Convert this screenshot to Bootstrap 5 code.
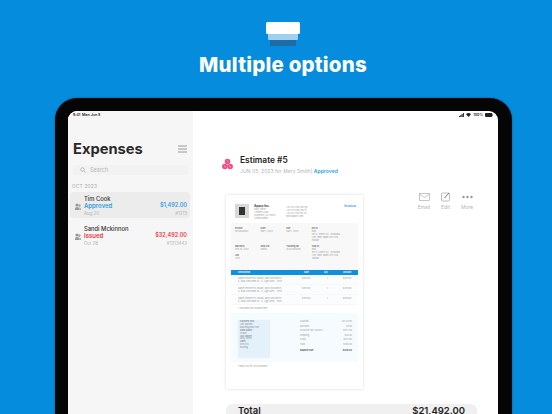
<!DOCTYPE html>
<html lang="en">
<head>
    <meta charset="UTF-8">
    <meta name="viewport" content="width=device-width, initial-scale=1">
    <title>Multiple options</title>
    <link href="https://cdn.jsdelivr.net/npm/bootstrap@5.3.0/dist/css/bootstrap.min.css" rel="stylesheet">
    <style>
        html, body { margin: 0; width: 552px; height: 414px; overflow: hidden; }
        body { background: #058cdc; font-family: Inter, "Liberation Sans", sans-serif; color: #222; }
        .stage { width: 552px; height: 414px; overflow: hidden; }
        .hero { height: 98px; padding: 22px 0 0 14px; }
        .stack-icon { width: 34px; height: 24px; display: block; }
        .hero-title { font-size: 20.5px; font-weight: 800; color: #fff; line-height: 24px; margin: 7px 0 0; letter-spacing: .2px; }
        .device { width: 457px; height: 316px; margin-left: 55px; background: #050505; border-radius: 22px 22px 0 0; padding: 13px 14px 0 13px; box-shadow: 0 0 2px #0b4f7d; }
        .screen { height: 303px; background: #fff; border-radius: 9px 9px 0 0; overflow: hidden; }
        .side { width: 125px; background: #f6f6f6; padding: 0 3px 0 2px; flex: none; }
        .status { height: 8px; font-size: 3.6px; font-weight: 600; line-height: 8px; color: #222; }
        .status-left { padding-left: 3px; }
        .side-head { height: 20px; margin: 20px 3px 0 3px; }
        .side-title { font-size: 14.7px; font-weight: 700; margin: 0; line-height: 20px; color: #2a2a2a; }
        .burger { width: 9px; height: 8px; display: block; }
        .search-box { height: 10px; margin: 6px 2px 0 3px; background: #f2f2f2; border-radius: 3px; padding-left: 7px; font-size: 5.5px; color: #b8b8b8; gap: 4px; }
        .month { font-size: 4.8px; color: #aaa; letter-spacing: .2px; margin: 8px 0 0 2px; line-height: 7px; }
        .exp-item { height: 26px; border-radius: 4px; padding: 2.5px 3px 0 5px; margin-top: 4px; }
        .exp-item.selected { background: #ececec; margin-top: 2px; }
        .exp-item .who { width: 6px; height: 7px; flex: none; margin-right: 3px; }
        .exp-name { font-size: 5.8px; font-weight: 500; line-height: 7.5px; color: #333; }
        .exp-status { font-size: 6px; font-weight: 600; line-height: 7.5px; }
        .exp-sub { font-size: 4.4px; line-height: 7.5px; color: #b2b2b2; }
        .exp-amount { font-size: 5.5px; font-weight: 600; line-height: 7.5px; }
        .c-blue { color: #2e9fdc; }
        .c-red { color: #ef3340; }
        .main-pane { min-width: 0; padding: 0 5px 0 29px; }
        .status-right { gap: 2px; }
        .est-head { margin-top: 30px; height: 30px; }
        .logo-mark { width: 11px; height: 12px; flex: none; margin-right: 7px; }
        .est-title { font-size: 8.4px; font-weight: 600; line-height: 12px; color: #222; }
        .est-sub { font-size: 5px; line-height: 8px; color: #b4b4b4; margin-top: 1px; letter-spacing: .05px; }
        .est-sub b { color: #2e9fdc; font-weight: 600; }
        .body-row { margin-top: 16px; padding-left: 4px; }
        .paper { width: 137px; height: 194px; background: #fff; border-radius: 2px; box-shadow: 0 0 3px rgba(0,0,0,.16); padding: 0 5px; flex: none; font-size: 2.2px; line-height: 3px; color: #999; }
        .paper-top { height: 28px; padding: 9px 2px 0 4px; }
        .co-logo { width: 14px; height: 14px; background: #d9d9d9; flex: none; margin-right: 5px; padding: 3px 4px; }
        .co-logo span { display: block; width: 100%; height: 100%; background: #333; }
        .co-addr { width: 32px; flex: none; }
        .co-name { font-size: 3px; font-weight: 700; color: #333; line-height: 4px; }
        .co-phones { padding-top: 2px; }
        .doc-kind { font-size: 3.4px; font-weight: 600; color: #2e9fdc; line-height: 4px; }
        .meta-box { background: #f8f8f8; height: 47px; padding: 4px 4px 0; }
        .meta-row { height: 18px; }
        .meta-col { flex: 1 1 0; }
        .meta-col.wide { flex: 1.65 1 0; }
        .meta-col b { color: #666; font-weight: 600; display: block; }
        .doc-band { height: 5px; background: #0f8fdc; color: #fff; padding: 0 5px 0 7px; line-height: 5px; font-weight: 600; }
        .band-desc { width: 66px; flex: none; }
        .band-rate { width: 20px; flex: none; }
        .band-qty { width: 19px; flex: none; }
        .doc-row { height: 10px; background: #fafcfe; padding: 1.5px 5px 0 7px; border-bottom: 1px solid #f7f7f7; }
        .doc-row .item-desc { width: 47px; flex: none; margin-right: 17px; }
        .item-rate { width: 25px; flex: none; }
        .item-qty { width: 16px; flex: none; }
        .doc-note { padding: 1.5px 7px 0; height: 8px; }
        .doc-lower { background: #f6fbff; height: 49px; padding: 7px 6px 0 7px; }
        .pay-box { width: 32px; height: 38px; background: #e4f1fb; border-radius: 1px; padding: 1px 2px; margin-right: 30px; flex: none; color: #8a8f99; line-height: 2.9px; overflow: hidden; }
        .sums { flex: 1 1 0; }
        .sum-line { padding-bottom: 1.5px; }
        .sum-total { padding-top: 2px; color: #555; font-weight: 700; }
        .thanks { padding: 3px 7px; }
        .side-actions { margin: -3px 0 0 52px; gap: 3.5px; }
        .act { width: 18px; font-size: 5px; color: #b5b5b5; line-height: 7px; text-align: center; }
        .act svg { width: 11px; height: 10px; display: block; margin: 0 auto 2px; }
        .total-bar { height: 30px; width: 251px; margin: 15px 0 0 4px; background: #f0f0f0; border-radius: 6px; padding: 1px 12px 0; }
        .total-bar span { font-size: 9.5px; font-weight: 600; color: #222; line-height: 12px; }
    </style>
</head>
<body>
<div class="stage">
    <div class="hero d-flex flex-column align-items-center">
        <svg class="stack-icon" viewBox="0 0 34 24">
            <rect x="4" y="15" width="26" height="9" rx="1" fill="#1d6ca5"/>
            <rect x="2" y="10" width="30" height="8" rx="1" fill="#9fd0ef"/>
            <rect x="0" y="0" width="34" height="12" rx="1.5" fill="#fff"/>
        </svg>
        <h1 class="hero-title">Multiple options</h1>
    </div>
    <div class="device">
        <div class="screen d-flex">
            <div class="side">
                <div class="status status-left">9:41&nbsp; Mon Jun 5</div>
                <div class="side-head d-flex justify-content-between align-items-center">
                    <h2 class="side-title">Expenses</h2>
                    <svg class="burger" viewBox="0 0 9 8"><path d="M0 1h9M0 4h9M0 7h9" stroke="#9a9a9a" stroke-width="1"/></svg>
                </div>
                <div class="search-box d-flex align-items-center">
                    <svg width="6" height="6" viewBox="0 0 6 6"><circle cx="2.5" cy="2.5" r="1.8" fill="none" stroke="#aaa" stroke-width=".7"/><path d="M4 4l1.5 1.5" stroke="#aaa" stroke-width=".7"/></svg>
                    <span>Search</span>
                </div>
                <div class="month">OCT 2023</div>
                <div class="exp-item selected d-flex">
                    <svg class="who align-self-center" viewBox="0 0 6 7"><circle cx="2" cy="2" r="1.6" fill="#999"/><circle cx="4.4" cy="2.6" r="1.3" fill="#aaa"/><path d="M0 7c0-2.4.8-3 2-3s2.4.6 2.4 3z" fill="#999"/><path d="M4.6 7H6c0-2-.5-2.8-1.7-2.8z" fill="#aaa"/></svg>
                    <div class="flex-grow-1">
                        <div class="exp-name">Tim Cook</div>
                        <div class="d-flex justify-content-between"><span class="exp-status c-blue">Approved</span><span class="exp-amount c-blue">$1,492.00</span></div>
                        <div class="d-flex justify-content-between exp-sub"><span>Aug 20</span><span>#1213</span></div>
                    </div>
                </div>
                <div class="exp-item d-flex">
                    <svg class="who align-self-center" viewBox="0 0 6 7"><circle cx="2" cy="2" r="1.6" fill="#999"/><circle cx="4.4" cy="2.6" r="1.3" fill="#aaa"/><path d="M0 7c0-2.4.8-3 2-3s2.4.6 2.4 3z" fill="#999"/><path d="M4.6 7H6c0-2-.5-2.8-1.7-2.8z" fill="#aaa"/></svg>
                    <div class="flex-grow-1">
                        <div class="exp-name">Sandi Mckinnon</div>
                        <div class="d-flex justify-content-between"><span class="exp-status c-red">Issued</span><span class="exp-amount c-red">$32,492.00</span></div>
                        <div class="d-flex justify-content-between exp-sub"><span>Oct 28</span><span>#1213443</span></div>
                    </div>
                </div>
            </div>
            <div class="main-pane flex-grow-1">
                <div class="status status-right d-flex justify-content-end align-items-center">
                    <svg width="5" height="4" viewBox="0 0 5 4"><path d="M0 3h1v1H0zM1.300 2h1v2h-1zM2.600 1h1v3h-1zM3.900 0h1v4h-1z" fill="#222"/></svg>
                    <svg width="5" height="4" viewBox="0 0 5 4"><path d="M0 1.300a3.500 3.500 0 0 1 5 0L2.500 4z" fill="#222"/></svg>
                    <span>100%</span>
                    <svg width="8" height="4" viewBox="0 0 8 4"><rect width="7.300" height="4" rx="1" fill="#222"/><rect x="7.500" y="1.200" width=".5" height="1.600" fill="#222"/></svg>
                </div>
                <div class="est-head d-flex align-items-center">
                    <svg class="logo-mark" viewBox="0 0 13 14"><circle cx="6.500" cy="4" r="3.300" fill="#ec4f86"/><circle cx="3.400" cy="10" r="3.300" fill="#ec4f86"/><circle cx="9.600" cy="10" r="3.300" fill="#ec4f86"/><path d="M6 3l1 2M3 9l1 2M9 9l1 2" stroke="#fff" stroke-width=".6"/></svg>
                    <div>
                        <div class="est-title">Estimate #5</div>
                        <div class="est-sub">JUN 05, 2023 for Mary Smith| <b>Approved</b></div>
                    </div>
                </div>
                <div class="body-row d-flex align-items-start">
                    <div class="paper">
                        <div class="paper-top d-flex">
                            <div class="co-logo"><span></span></div>
                            <div class="co-addr">
                                <div class="co-name">Appsy Inc.</div>
                                <div>Mary Smith<br>1 Infinite Loop<br>Cupertino, CA 95014<br>United States</div>
                            </div>
                            <div class="co-phones flex-grow-1">+01 234 456 789 (m)<br>+01 234 456 780 (f)<br>+01 234 456 781 (o)<br>www.appsy.com</div>
                            <div class="doc-kind">Invoice</div>
                        </div>
                        <div class="meta-box">
                            <div class="meta-row d-flex">
                                <div class="meta-col"><b>Invoice</b>INV0000042</div>
                                <div class="meta-col"><b>Date</b>Mar 1, 2023</div>
                                <div class="meta-col"><b>Due</b>Mar 1, 2023</div>
                                <div class="meta-col wide"><b>Bill to</b>Bob<br>501 S. Cherry St., Tonkawa<br>Unit, New Taipei City 236<br>Taiwan</div>
                            </div>
                            <div class="d-flex">
                                <div class="meta-col"><b>Warranty</b>Feb 28, 2023<br><br><b>Job</b>1234</div>
                                <div class="meta-col"><b>Ship Via</b>FedEx</div>
                                <div class="meta-col"><b>Tracking No.</b>1ZA23456789</div>
                                <div class="meta-col wide"><b>Ship to</b>Bob<br>501 S. Cherry St., Tonkawa<br>Unit, New Taipei City 236<br>Taiwan</div>
                            </div>
                        </div>
                        <div class="doc-band d-flex"><span class="band-desc">Description</span><span class="band-rate">Rate</span><span class="band-qty">Qty</span><span>Amount</span></div>
                        <div class="doc-row d-flex"><span class="item-desc">Apple iPhone Pro 256GB, Dark Old Merch - S, Dual Lens Rear-M - S, Light Grey - 1339</span><span class="item-rate">$199.00</span><span class="item-qty">1</span><span>$199.00</span></div>
                        <div class="doc-row d-flex"><span class="item-desc">Apple iPhone Pro 256GB, Dark Old Merch - S, Dual Lens Rear-M - S, Light Grey - 1339</span><span class="item-rate">$199.00</span><span class="item-qty">1</span><span>$199.00</span></div>
                        <div class="doc-row d-flex"><span class="item-desc">Apple iPhone Pro 256GB, Dark Old Merch - S, Dual Lens Rear-M - S, Light Grey - 1339</span><span class="item-rate">$199.00</span><span class="item-qty">1</span><span>$199.00</span></div>
                        <div class="doc-note">* Indicates non-taxable item</div>
                        <div class="doc-lower d-flex">
                            <div class="pay-box"><b>Payment Info</b><br>Job Applied<br>applied@mail.com<br><b>Bank Name</b><br>Chase<br><b>Acc Owner</b><br>Mary Smith<br><b>Swift</b><br>ID12345<br>Routing</div>
                            <div class="sums">
                                <div class="sum-line d-flex justify-content-between"><span>Subtotal</span><span>$4,147.00</span></div>
                                <div class="sum-line d-flex justify-content-between"><span>Discount</span><span>-$7.00</span></div>
                                <div class="sum-line d-flex justify-content-between"><span>Inclusive Tax (10.00%)</span><span>$372.00</span></div>
                                <div class="sum-line d-flex justify-content-between"><span>Shipping</span><span>$20.00</span></div>
                                <div class="sum-line d-flex justify-content-between"><span>Fixed</span><span>$927.00</span></div>
                                <div class="sum-line d-flex justify-content-between"><span>Total</span><span>$308.00</span></div>
                                <div class="sum-total d-flex justify-content-between"><span>Balance Due</span><span>$308.00</span></div>
                            </div>
                        </div>
                        <div class="thanks">Thank you for your business</div>
                    </div>
                    <div class="side-actions d-flex">
                        <div class="act"><svg viewBox="0 0 11 10"><rect x=".5" y="1.500" width="10" height="7" fill="none" stroke="#b0b0b0" stroke-width=".7"/><path d="M.5 2l5 3.500 5-3.500" fill="none" stroke="#b0b0b0" stroke-width=".7"/></svg>Email</div>
                        <div class="act"><svg viewBox="0 0 11 10"><rect x="1.500" y="1" width="8" height="8" rx=".8" fill="none" stroke="#b0b0b0" stroke-width=".8"/><path d="M4.500 6l4.500-5" stroke="#777" stroke-width="1"/></svg>Edit</div>
                        <div class="act"><svg viewBox="0 0 11 10"><circle cx="1.500" cy="5" r="1.200" fill="#999"/><circle cx="5.500" cy="5" r="1.200" fill="#999"/><circle cx="9.500" cy="5" r="1.200" fill="#999"/></svg>More</div>
                    </div>
                </div>
                <div class="total-bar d-flex justify-content-between"><span>Total</span><span>$21,492.00</span></div>
            </div>
        </div>
    </div>
</div>
<script src="https://cdn.jsdelivr.net/npm/bootstrap@5.3.0/dist/js/bootstrap.bundle.min.js"></script>
</body>
</html>
